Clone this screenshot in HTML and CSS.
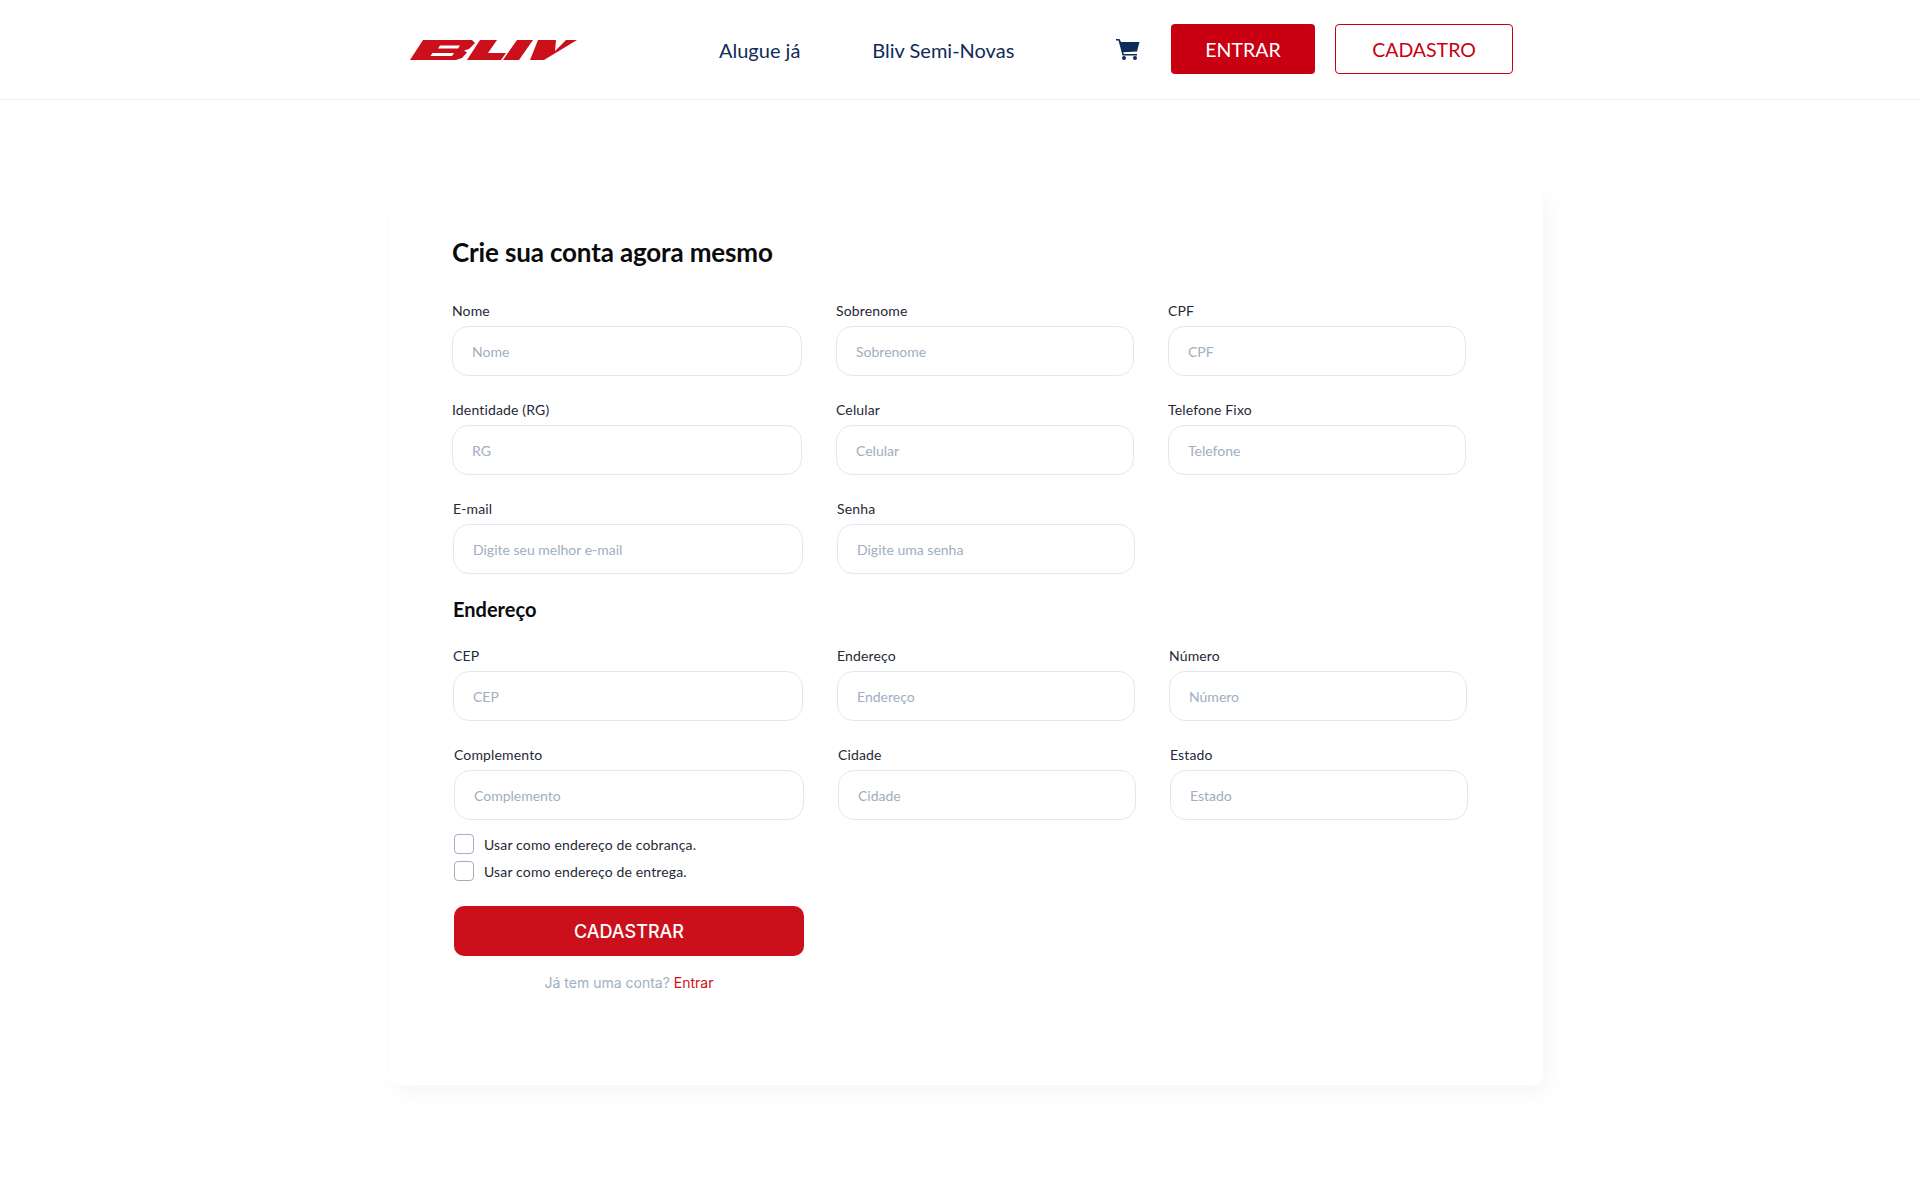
FILE: index.html
```html
<!DOCTYPE html>
<html lang="pt-BR">
<head>
  <meta charset="UTF-8">
  <title>Bliv - Cadastro</title>
  <meta name="viewport" content="width=device-width, initial-scale=1.0" />
  <link rel="stylesheet" href="styles.css">
</head>
<body>
  <!-- Topo -->
  <header class="topbar">
    <a class="logo" href="#" aria-label="Bliv">
      <svg width="167" height="20" viewBox="0 0 167 20">
        <path fill-rule="evenodd" d="M13 0H62L65 3L59 9L54 10.500L57 12.500L52 18L46 20H0ZM30 5.500L28 8.500H48L50 5.500ZM22.500 13L20.500 16H42L44 13Z" />
        <path d="M70 0H87L78 13H96L91 20H57Z" />
        <path d="M107 0H123L109 20H93Z" />
        <path d="M128 0H146L145 11L156 0H167L134 20H120Z" />
      </svg>
    </a>
    <nav class="nav">
      <a href="#">Alugue já</a>
      <a href="#">Bliv Semi-Novas</a>
    </nav>
    <div class="actions">
      <a class="cart" href="#" aria-label="Carrinho">
        <svg width="24" height="22" viewBox="0 0 24 22">
          <path d="M0 1H3.500L5 4H23.500L21 13.500L7.200 14.300L7.800 16H21V17.500H6.500L2.500 2.500H0Z" />
          <circle cx="8" cy="20" r="2" />
          <circle cx="19" cy="20" r="2" />
        </svg>
      </a>
      <a class="btn btn-solid" href="#">ENTRAR</a>
      <a class="btn btn-outline" href="#">CADASTRO</a>
    </div>
  </header>

  <!-- Formulario -->
  <main class="card">
    <h1 class="card-title">Crie sua conta agora mesmo</h1>

    <div class="form-row">
      <div class="field"><label>Nome</label><input type="text" placeholder="Nome"></div>
      <div class="field"><label>Sobrenome</label><input type="text" placeholder="Sobrenome"></div>
      <div class="field"><label>CPF</label><input type="text" placeholder="CPF"></div>
    </div>
    <div class="form-row">
      <div class="field"><label>Identidade (RG)</label><input type="text" placeholder="RG"></div>
      <div class="field"><label>Celular</label><input type="text" placeholder="Celular"></div>
      <div class="field"><label>Telefone Fixo</label><input type="text" placeholder="Telefone"></div>
    </div>
    <div class="form-row shift-1">
      <div class="field"><label>E-mail</label><input type="text" placeholder="Digite seu melhor e-mail"></div>
      <div class="field"><label>Senha</label><input type="password" placeholder="Digite uma senha"></div>
    </div>

    <h2 class="section-title">Endereço</h2>

    <div class="form-row shift-1">
      <div class="field"><label>CEP</label><input type="text" placeholder="CEP"></div>
      <div class="field"><label>Endereço</label><input type="text" placeholder="Endereço"></div>
      <div class="field"><label>Número</label><input type="text" placeholder="Número"></div>
    </div>
    <div class="form-row shift-2">
      <div class="field"><label>Complemento</label><input type="text" placeholder="Complemento"></div>
      <div class="field"><label>Cidade</label><input type="text" placeholder="Cidade"></div>
      <div class="field"><label>Estado</label><input type="text" placeholder="Estado"></div>
    </div>

    <div class="footer-col">
      <label class="check"><input type="checkbox"><span>Usar como endereço de cobrança.</span></label>
      <label class="check"><input type="checkbox"><span>Usar como endereço de entrega.</span></label>
      <button class="submit" type="button">CADASTRAR</button>
      <p class="login-hint">Já tem uma conta? <a href="#">Entrar</a></p>
    </div>
  </main>
</body>
</html>
```

FILE: styles.css
```css
:root {
  --red: #c90012;
  --red-dark: #cb101c;
  --navy: #0f2c59;
  --text: #1f2937;
  --placeholder: #a0aec0;
  --border: #e2e8f0;
}

* {
  box-sizing: border-box;
}

body {
  display: flow-root;
  min-height: 100vh;
  margin: 0;
  background: #fff;
  font-family: "Lato", sans-serif;
  color: var(--text);
}

/* Topo */
.topbar {
  display: flex;
  align-items: center;
  height: 100px;
  padding: 0 407px 1px 410px;
  border-bottom: 1px solid #f1f1f1;
}

.logo {
  display: flex;
  margin-top: 2px;
}

.logo svg {
  fill: var(--red-dark);
}

.nav {
  display: flex;
  gap: 72px;
  margin-left: 142px;
  padding-top: 1px;
}

.nav a {
  color: var(--navy);
  font-size: 20px;
  text-decoration: none;
}

.actions {
  display: flex;
  align-items: center;
  margin-left: auto;
}

.cart {
  display: flex;
  margin-right: 31px;
}

.cart svg {
  fill: var(--navy);
}

.btn {
  display: flex;
  align-items: center;
  justify-content: center;
  height: 50px;
  border-radius: 4px;
  font-size: 19.5px;
  text-decoration: none;
}

.btn-solid {
  width: 144px;
  margin-right: 20px;
  background: var(--red);
  color: #fff;
}

.btn-outline {
  width: 178px;
  border: 1px solid var(--red);
  color: var(--red);
}

/* Card do formulario */
.card {
  width: 1154px;
  height: 902px;
  margin: 83px 0 0 389px;
  padding: 51px 0 0 63px;
  border-radius: 10px;
  background: #fff;
  box-shadow: 6px 10px 20px rgba(0, 0, 0, 0.035);
}

.card-title {
  margin: 0 0 29px;
  color: #0b0b0b;
  font-size: 26px;
  font-weight: 700;
  letter-spacing: -0.15px;
  line-height: 36px;
}

.section-title {
  margin: -1px 1px 21px;
  color: #0b0b0b;
  font-size: 20px;
  font-weight: 700;
  line-height: 28px;
}

.form-row {
  display: grid;
  grid-template-columns: 350px 298px 298px;
  column-gap: 34px;
  margin-bottom: 22px;
}

.shift-1 {
  margin-left: 1px;
}

.shift-2 {
  margin-left: 2px;
}

.field label {
  display: block;
  margin-bottom: 3px;
  font-size: 14px;
  letter-spacing: 0.15px;
  line-height: 24px;
}

.field input {
  display: block;
  width: 100%;
  height: 50px;
  padding: 0 19px;
  border: 1px solid var(--border);
  border-radius: 16px;
  outline: none;
  font-family: inherit;
  font-size: 14px;
}

.field input::placeholder {
  color: var(--placeholder);
  opacity: 1;
}

/* Final do formulario */
.footer-col {
  width: 350px;
  margin: -8px 0 0 2px;
}

.check {
  display: flex;
  align-items: center;
  gap: 10px;
  height: 20px;
  margin-bottom: 7px;
  font-size: 14px;
  letter-spacing: 0.15px;
}

.check input {
  width: 20px;
  height: 20px;
  margin: 0;
  border: 1px solid var(--placeholder);
  border-radius: 4px;
  background: #fff;
  appearance: none;
}

.submit {
  display: block;
  width: 100%;
  height: 50px;
  margin-top: 25px;
  border: none;
  border-radius: 10px;
  background: var(--red-dark);
  color: #fff;
  font-family: "Inter", sans-serif;
  font-size: 18px;
  font-weight: 500;
}

.login-hint {
  margin: 17px 0 0;
  color: var(--placeholder);
  font-family: "Inter", sans-serif;
  font-size: 14px;
  line-height: 20px;
  text-align: center;
}

.login-hint a {
  color: var(--red-dark);
  text-decoration: none;
}
```
